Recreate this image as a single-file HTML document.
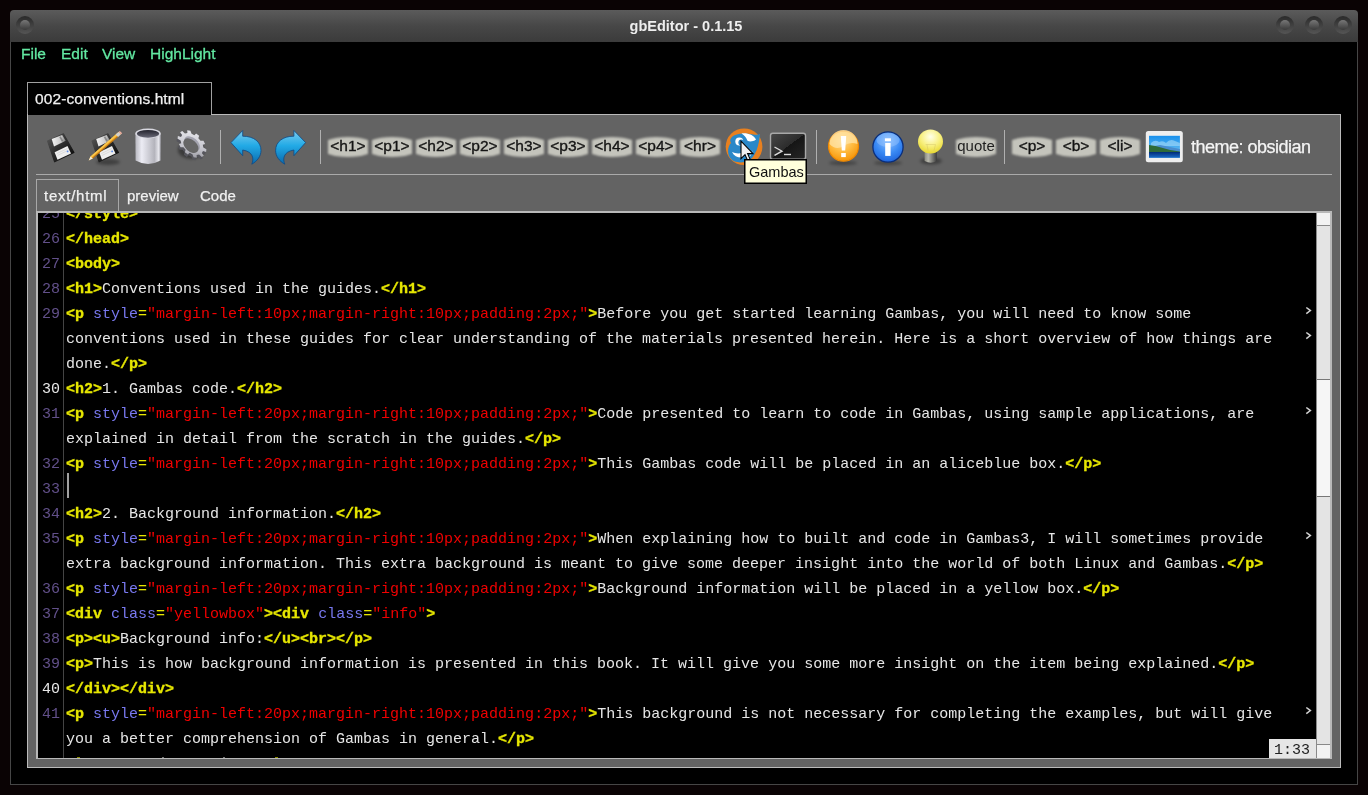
<!DOCTYPE html>
<html><head><meta charset="utf-8">
<style>
*{margin:0;padding:0;box-sizing:border-box}
html,body{width:1368px;height:795px;overflow:hidden;background:#0a0304;font-family:"Liberation Sans",sans-serif}
.abs{position:absolute}
#win{position:absolute;left:10px;top:42px;width:1348px;height:743px;background:#000;border:1px solid #464646;border-top:none}
#title{position:absolute;left:10px;top:10px;width:1348px;height:32px;border-radius:4px 4px 0 0;background:linear-gradient(#5b5b5b,#474747 50%,#3b3b3b)}
#title .t{position:absolute;left:2px;width:100%;top:8px;text-align:center;color:#eee;font-size:14.5px;font-weight:bold}
.circ{position:absolute;width:18px;height:18px;border-radius:50%;background:linear-gradient(#2a2a2a,#555);}
.circ::after{content:"";position:absolute;left:4px;top:4px;width:10px;height:10px;border-radius:50%;background:linear-gradient(#777,#3a3a3a)}
#menu span{position:absolute;top:45px;color:#62e8a2;font-size:15.5px;-webkit-text-stroke:0.3px #62e8a2}
#ftab{position:absolute;left:27px;top:82px;width:185px;height:33px;background:#000;border:1px solid #a0a0a0;border-bottom:none;color:#f0f0f0;font-size:15.5px;letter-spacing:0.1px;padding:7px 0 0 7px;-webkit-text-stroke:0.25px #f0f0f0}
#panel{position:absolute;left:27px;top:114px;width:1314px;height:654px;background:#636363;border:1px solid #bbb;border-top:none;padding-top:1px}
#ptop{position:absolute;left:211px;top:114px;width:1130px;height:1px;background:#bbb}
#ptab{position:absolute;left:28px;top:114px;width:183px;height:1px;background:#000}
#sep{position:absolute;left:36px;top:174px;width:1296px;height:1px;background:#aaa}
.stab{position:absolute;top:187px;color:#f0f0f0;font-size:15px;-webkit-text-stroke:0.25px #f0f0f0}
#editor{position:absolute;left:36px;top:211px;width:1296px;height:548px;background:#000;border:2px solid #b8b8b8;border-top-width:2px;border-bottom-width:1px;overflow:hidden}
#gutline{position:absolute;left:63px;top:213px;width:1px;height:545px;background:#444}
#code{will-change:transform;position:absolute;left:38px;top:213px;width:1278px;height:545px;overflow:hidden;font-family:"Liberation Mono",monospace;font-size:15px;line-height:25px;color:#e6e6e6;white-space:pre}
.row{position:absolute;left:0;height:25px;width:1278px}
.ln{position:absolute;left:0;width:22px;text-align:right;color:#62508a}
.ln.w{color:#e8e8e8}
.tx{position:absolute;left:28px}
i{font-style:normal}
i.k{color:#e6e600;font-weight:bold;-webkit-text-stroke:0.3px #e6e600}
i.a{color:#7878ee}
i.s{color:#f00000}
i.e{color:#e6e600}
.wm{position:absolute;left:1266px;top:0}
#scroll{position:absolute;left:1316px;top:213px;width:14px;height:545px;background:#e4e4e4;border-left:1px solid #8a8a8a}
#status{position:absolute;left:1269px;top:739px;width:47px;height:19px;background:#e6e6e6;color:#222;font-family:"Liberation Mono",monospace;font-size:15px;line-height:24px;padding-left:5px;overflow:hidden}
.tag{position:absolute;top:137px;width:40px;text-align:center;font-size:15.5px;-webkit-text-stroke:0.35px #141414;color:#141414;line-height:18px}
#theme{position:absolute;left:1191px;top:137px;font-size:18px;letter-spacing:-0.5px;color:#f4f4f4;-webkit-text-stroke:0.25px #f4f4f4}
#tip{position:absolute;left:744px;top:159px;width:63px;height:25px;background:#ffffdc;border:1px solid #000;box-shadow:inset 0 0 0 0.5px #000;font-size:14.5px;color:#111;padding:4px 0 0 4px}
#seltab{position:absolute;left:36px;top:179px;width:83px;height:34px;border:1px solid #a8a8a8;border-bottom:none}
#sbtn1{position:absolute;left:1317px;top:213px;width:13px;height:13px;background:#f2f2f2;border-bottom:1px solid #888}
#sthumb{position:absolute;left:1317px;top:379px;width:13px;height:118px;background:#f6f6f6;border-top:1px solid #777;border-bottom:1px solid #777}
#sbtn2{position:absolute;left:1317px;top:744px;width:13px;height:14px;background:#f2f2f2;border-top:1px solid #888}
#cursor{position:absolute;left:29px;top:260px;width:1.5px;height:25px;background:#a0a0a0}
</style></head><body><div id="root" style="position:absolute;left:0;top:0;width:1368px;height:795px;will-change:transform">
<div id="win"></div>
<div id="title"><div class="t">gbEditor - 0.1.15</div>
<div class="circ" style="left:6px;top:6px"></div>
<div class="circ" style="left:1266px;top:6px"></div>
<div class="circ" style="left:1295px;top:6px"></div>
<div class="circ" style="left:1324px;top:6px"></div>
</div>
<div id="menu"><span style="left:21px">File</span><span style="left:61px">Edit</span><span style="left:102px">View</span><span style="left:150px">HighLight</span></div>
<div id="ftab">002-conventions.html</div>
<div id="panel"></div><div id="ptop"></div><div id="ptab"></div>
<div id="sep"></div>
<svg id="tb" width="1368" height="200" viewBox="0 0 1368 200" style="position:absolute;left:0;top:0">
<defs>
<filter id="bl1" x="-20%" y="-20%" width="140%" height="140%"><feGaussianBlur stdDeviation="0.9"/></filter>
<filter id="bl2" x="-50%" y="-50%" width="200%" height="200%"><feGaussianBlur stdDeviation="1.6"/></filter>
<linearGradient id="flop" x1="0" y1="0" x2="1" y2="1"><stop offset="0" stop-color="#5a5a5a"/><stop offset="0.5" stop-color="#2a2a2a"/><stop offset="1" stop-color="#050505"/></linearGradient>
<linearGradient id="shut" x1="0" y1="0" x2="1" y2="0"><stop offset="0" stop-color="#f4f4f4"/><stop offset="0.7" stop-color="#c8c8c8"/><stop offset="1" stop-color="#777"/></linearGradient>
<linearGradient id="trash" x1="0" y1="0" x2="1" y2="0"><stop offset="0" stop-color="#b8b8c0"/><stop offset="0.25" stop-color="#ececf4"/><stop offset="0.75" stop-color="#b4b4bc"/><stop offset="0.92" stop-color="#e8e8ee"/><stop offset="1" stop-color="#9a9aa2"/></linearGradient>
<linearGradient id="trashin" x1="0" y1="0" x2="0" y2="1"><stop offset="0" stop-color="#22222c"/><stop offset="1" stop-color="#6a6a78"/></linearGradient>
<linearGradient id="gear" x1="0" y1="0" x2="1" y2="1"><stop offset="0" stop-color="#f0f0f4"/><stop offset="0.6" stop-color="#c4c4cc"/><stop offset="1" stop-color="#8a8a92"/></linearGradient>
<linearGradient id="arr" x1="0" y1="0" x2="0" y2="1"><stop offset="0" stop-color="#7ccbee"/><stop offset="0.45" stop-color="#22aae6"/><stop offset="1" stop-color="#0a6aae"/></linearGradient>
<radialGradient id="warn" cx="0.45" cy="0.3" r="0.75"><stop offset="0" stop-color="#ffe0a0"/><stop offset="0.5" stop-color="#ffbb40"/><stop offset="1" stop-color="#f59000"/></radialGradient>
<radialGradient id="info" cx="0.5" cy="0.3" r="0.75"><stop offset="0" stop-color="#8ec0ff"/><stop offset="0.55" stop-color="#3a8af4"/><stop offset="1" stop-color="#1a5ed8"/></radialGradient>
<radialGradient id="bulb" cx="0.5" cy="0.3" r="0.7"><stop offset="0" stop-color="#ffffe8"/><stop offset="0.55" stop-color="#f8f080"/><stop offset="1" stop-color="#e8d830"/></radialGradient>
<linearGradient id="base" x1="0" y1="0" x2="1" y2="0"><stop offset="0" stop-color="#8a8a80"/><stop offset="0.3" stop-color="#b8b8ae"/><stop offset="1" stop-color="#3a3a3a"/></linearGradient>
<linearGradient id="term" x1="0" y1="0" x2="1" y2="1"><stop offset="0" stop-color="#484848"/><stop offset="0.5" stop-color="#2c2c2c"/><stop offset="0.5" stop-color="#151515"/><stop offset="1" stop-color="#262626"/></linearGradient>
<linearGradient id="sky" x1="0" y1="0" x2="0" y2="1"><stop offset="0" stop-color="#1890ec"/><stop offset="1" stop-color="#80ccf4"/></linearGradient>
<linearGradient id="water" x1="0" y1="0" x2="0" y2="1"><stop offset="0" stop-color="#002a78"/><stop offset="1" stop-color="#1a6cc8"/></linearGradient>
<clipPath id="btnclip"><rect x="-20" y="-11" width="40" height="22"/></clipPath>

</defs>
<!-- floppy 1 -->
<g id="floppy">
<path d="M47.6,141.1 L63.4,133.8 L73.9,152.5 L54.6,161.8 Z" fill="url(#flop)" stroke="url(#flop)" stroke-width="1.2" stroke-linejoin="round"/>
<path d="M51.7,139 L62.2,134.9 L65.7,140.8 L54,146.6 Z" fill="url(#shut)"/>
<path d="M59.2,136.9 L60.8,136.3 L63.4,141 L61.8,141.7 Z" fill="#555" opacity="0.55"/>
<path d="M54.6,152.2 L67.5,146 L71,153.6 L57.5,159.8 Z" fill="#eeeeee"/>
<path d="M56.8,153.6 L67.6,148.4 M57.6,155.4 L68.4,150.2" stroke="#c8c8c8" stroke-width="0.5"/>
<circle cx="67.6" cy="151.4" r="0.9" fill="#5a8ae8"/>
</g>
<!-- floppy 2 + pencil -->
<ellipse cx="108" cy="162" rx="12" ry="3" fill="#000" opacity="0.35" filter="url(#bl2)"/>
<g transform="translate(44.5,0)">
<path d="M47.6,141.1 L63.4,133.8 L73.9,152.5 L54.6,161.8 Z" fill="url(#flop)" stroke="url(#flop)" stroke-width="1.2" stroke-linejoin="round"/>
<path d="M51.7,139 L62.2,134.9 L65.7,140.8 L54,146.6 Z" fill="url(#shut)"/>
<path d="M59.2,136.9 L60.8,136.3 L63.4,141 L61.8,141.7 Z" fill="#555" opacity="0.55"/>
<path d="M54.6,152.2 L67.5,146 L71,153.6 L57.5,159.8 Z" fill="#eeeeee"/>
<path d="M56.8,153.6 L67.6,148.4 M57.6,155.4 L68.4,150.2" stroke="#c8c8c8" stroke-width="0.5"/>
<circle cx="67.6" cy="151.4" r="0.9" fill="#5a8ae8"/>
</g>
<path d="M118.6,131.9 L121,134.3 L92.8,158.6 L88.7,160.4 L90.5,156.4 Z" fill="#f0a422"/>
<path d="M118.6,131.9 L90.5,156.4 L91.6,157.5 L119.8,133.1 Z" fill="#f8c850"/>
<path d="M121,134.3 L92.8,158.6 L92.2,158 L120.4,133.7 Z" fill="#b06a10"/>
<path d="M90.5,156.4 L92.8,158.6 L88.7,160.4 Z" fill="#f2eee0"/>
<path d="M115.6,134.4 L118.6,131.9 L121,134.3 L118,136.9 Z" fill="#cfcfcf"/>
<path d="M118.6,131.9 L119.8,130.9 L122.2,133.3 L121,134.3 Z" fill="#f0b0a0"/>
<!-- trash -->
<path d="M135.4,133.5 L135.6,160.5 Q148,167.5 160.6,160.5 L160.8,133.5 Z" fill="url(#trash)"/>
<ellipse cx="148" cy="133.5" rx="12.7" ry="5" fill="#d8d8e0"/>
<ellipse cx="148" cy="133.8" rx="11.2" ry="3.9" fill="url(#trashin)"/>
<!-- gear -->
<ellipse cx="191" cy="150" rx="13" ry="9" fill="#000" opacity="0.4" filter="url(#bl2)"/>
<g transform="translate(191,146.5) rotate(42) scale(1.08,0.7)"><path d="M12.30,0.00 L15.46,1.17 L14.80,4.60 L11.44,4.53 L9.95,7.23 L11.82,10.03 L9.27,12.42 L6.59,10.39 L3.80,11.70 L3.67,15.06 L0.19,15.50 L-0.77,12.28 L-3.80,11.70 L-5.89,14.34 L-8.95,12.65 L-7.84,9.48 L-9.95,7.23 L-13.19,8.14 L-14.68,4.97 L-11.91,3.06 L-12.30,0.00 L-15.46,-1.17 L-14.80,-4.60 L-11.44,-4.53 L-9.95,-7.23 L-11.82,-10.03 L-9.27,-12.42 L-6.59,-10.39 L-3.80,-11.70 L-3.67,-15.06 L-0.19,-15.50 L0.77,-12.28 L3.80,-11.70 L5.89,-14.34 L8.95,-12.65 L7.84,-9.48 L9.95,-7.23 L13.19,-8.14 L14.68,-4.97 L11.91,-3.06 Z" fill="#55555c"/></g>
<g transform="translate(192,144) rotate(42) scale(1.08,0.7)">
<path d="M12.30,0.00 L15.46,1.17 L14.80,4.60 L11.44,4.53 L9.95,7.23 L11.82,10.03 L9.27,12.42 L6.59,10.39 L3.80,11.70 L3.67,15.06 L0.19,15.50 L-0.77,12.28 L-3.80,11.70 L-5.89,14.34 L-8.95,12.65 L-7.84,9.48 L-9.95,7.23 L-13.19,8.14 L-14.68,4.97 L-11.91,3.06 L-12.30,0.00 L-15.46,-1.17 L-14.80,-4.60 L-11.44,-4.53 L-9.95,-7.23 L-11.82,-10.03 L-9.27,-12.42 L-6.59,-10.39 L-3.80,-11.70 L-3.67,-15.06 L-0.19,-15.50 L0.77,-12.28 L3.80,-11.70 L5.89,-14.34 L8.95,-12.65 L7.84,-9.48 L9.95,-7.23 L13.19,-8.14 L14.68,-4.97 L11.91,-3.06 Z" fill="url(#gear)"/>
<circle cx="0" cy="0" r="8.6" fill="#a4a4b0"/>
<circle cx="0.3" cy="2.8" r="8.2" fill="#666"/>
</g>
<!-- separators -->
<rect x="220" y="130" width="1" height="34" fill="#b0b0b0"/>
<rect x="320" y="130" width="1" height="34" fill="#b0b0b0"/>
<rect x="816" y="130" width="1" height="34" fill="#b0b0b0"/>
<rect x="1004" y="130" width="1" height="34" fill="#b0b0b0"/>
<!-- undo -->
<path id="undo" d="M231,142.6 L242.7,130.5 L242.7,136.2 C254,136.2 261,142 261,150.5 C261,156 257.5,161 251.8,164.2 C254,159 253.5,151.8 242.7,150 L242.7,155.7 Z" fill="url(#arr)" stroke="#0c4a86" stroke-width="0.8"/>
<path transform="translate(536.6,0) scale(-1,1)" d="M231,142.6 L242.7,130.5 L242.7,136.2 C254,136.2 261,142 261,150.5 C261,156 257.5,161 251.8,164.2 C254,159 253.5,151.8 242.7,150 L242.7,155.7 Z" fill="url(#arr)" stroke="#0c4a86" stroke-width="0.8"/>
<!-- tag buttons -->
<g transform="translate(348,147)"><g filter="url(#bl1)"><ellipse cx="0" cy="0" rx="28" ry="10" fill="#c4c4bc" clip-path="url(#btnclip)"/></g></g>
<g transform="translate(392,147)"><g filter="url(#bl1)"><ellipse cx="0" cy="0" rx="28" ry="10" fill="#c4c4bc" clip-path="url(#btnclip)"/></g></g>
<g transform="translate(436,147)"><g filter="url(#bl1)"><ellipse cx="0" cy="0" rx="28" ry="10" fill="#c4c4bc" clip-path="url(#btnclip)"/></g></g>
<g transform="translate(480,147)"><g filter="url(#bl1)"><ellipse cx="0" cy="0" rx="28" ry="10" fill="#c4c4bc" clip-path="url(#btnclip)"/></g></g>
<g transform="translate(524,147)"><g filter="url(#bl1)"><ellipse cx="0" cy="0" rx="28" ry="10" fill="#c4c4bc" clip-path="url(#btnclip)"/></g></g>
<g transform="translate(568,147)"><g filter="url(#bl1)"><ellipse cx="0" cy="0" rx="28" ry="10" fill="#c4c4bc" clip-path="url(#btnclip)"/></g></g>
<g transform="translate(612,147)"><g filter="url(#bl1)"><ellipse cx="0" cy="0" rx="28" ry="10" fill="#c4c4bc" clip-path="url(#btnclip)"/></g></g>
<g transform="translate(656,147)"><g filter="url(#bl1)"><ellipse cx="0" cy="0" rx="28" ry="10" fill="#c4c4bc" clip-path="url(#btnclip)"/></g></g>
<g transform="translate(700,147)"><g filter="url(#bl1)"><ellipse cx="0" cy="0" rx="28" ry="10" fill="#c4c4bc" clip-path="url(#btnclip)"/></g></g>
<g transform="translate(976,147)"><g filter="url(#bl1)"><ellipse cx="0" cy="0" rx="28" ry="10" fill="#c4c4bc" clip-path="url(#btnclip)"/></g></g>
<g transform="translate(1032,147)"><g filter="url(#bl1)"><ellipse cx="0" cy="0" rx="28" ry="10" fill="#c4c4bc" clip-path="url(#btnclip)"/></g></g>
<g transform="translate(1076,147)"><g filter="url(#bl1)"><ellipse cx="0" cy="0" rx="28" ry="10" fill="#c4c4bc" clip-path="url(#btnclip)"/></g></g>
<g transform="translate(1120,147)"><g filter="url(#bl1)"><ellipse cx="0" cy="0" rx="28" ry="10" fill="#c4c4bc" clip-path="url(#btnclip)"/></g></g>
<!-- gambas -->
<circle cx="744.05" cy="146.75" r="18.35" fill="#e8801f"/>
<path d="M743,133.4 C752,133.2 757,136 760,134 C759,145 756,157 748,161 C742,163.5 733,163 729.5,157 C727,152 728,146 731,143 C728,138 734,133.6 743,133.4 Z" fill="#2a88c8"/>
<path d="M741.5,133.5 C748,132.8 753.5,135 756,139.5 C753,141.8 749.5,141.8 747.5,140.8 C746.5,137.8 744.5,135.3 741.5,133.5 Z" fill="#fff"/>
<circle cx="739.3" cy="141.5" r="4" fill="#fff"/><circle cx="741.3" cy="142.4" r="2.9" fill="#2a88c8"/>
<path d="M732,152 C735,153.5 739,153.8 742,152.8 L742.5,157.5 C738,158 734,156 732,152 Z" fill="#fff"/>
<path d="M753,150 C752,154 750,157 748,158 L751,154 Z" fill="#e8eef4"/>
<!-- terminal -->
<rect x="770.5" y="133.3" width="35" height="26" rx="2.2" fill="url(#term)" stroke="#a8a8a8" stroke-width="1.4"/>
<path d="M774.5,147 L782,151.2 L774.5,155.4" fill="none" stroke="#dcdcdc" stroke-width="1.4"/>
<rect x="784" y="153.8" width="7" height="1.4" fill="#dcdcdc"/>
<!-- warning -->
<ellipse cx="843" cy="163" rx="14" ry="2.2" fill="#000" opacity="0.3" filter="url(#bl2)"/>
<circle cx="843.5" cy="146.2" r="15" fill="url(#warn)" stroke="#f08800" stroke-width="1.2"/>
<path d="M829.5,144 A14,14 0 0 1 857.5,144 Q850,141 843.5,146 Q836,151 829.5,144 Z" fill="#ffe4a8" opacity="0.75"/>
<path d="M840.8,136 L846.2,136 L845.2,150.5 L841.8,150.5 Z" fill="#fff"/>
<rect x="841.2" y="153" width="4.6" height="4.1" fill="#fff"/>
<!-- info -->
<ellipse cx="888" cy="163" rx="14" ry="2.2" fill="#000" opacity="0.3" filter="url(#bl2)"/>
<circle cx="888" cy="147" r="15.1" fill="url(#info)" stroke="#0a2e7a" stroke-width="1.3"/>
<ellipse cx="888" cy="140" rx="11.5" ry="7" fill="#9cc8ff" opacity="0.45"/>
<rect x="884.9" y="138.3" width="6" height="2.9" fill="#fff"/>
<rect x="885.2" y="143" width="5.4" height="12.9" fill="#fff"/>
<!-- bulb -->
<ellipse cx="931" cy="161" rx="11" ry="3.5" fill="#000" opacity="0.35" filter="url(#bl2)"/>
<path d="M924.6,152 L936.8,152 L936.8,161 Q930.7,164.5 924.6,161 Z" fill="url(#base)"/>
<ellipse cx="930.5" cy="141.6" rx="12.5" ry="12" fill="url(#bulb)"/>
<path d="M925.5,144.5 L935.5,144.5 L934,150.5 M927,144.5 L928,150.5" fill="none" stroke="#c8b860" stroke-width="0.5" opacity="0.7"/>
<!-- image icon -->
<rect x="1145.8" y="131" width="37" height="31.2" rx="2.5" fill="#eeeeee"/>
<rect x="1149" y="135.8" width="30.9" height="21.9" fill="url(#sky)"/>
<path d="M1151,143 Q1155,139 1159,142 Q1163,140 1166,143 Q1170,138 1175,141 L1179.9,143 L1179.9,146 L1151,146 Z" fill="#a8dcf8" opacity="0.6"/>
<path d="M1149,147 L1160,145 L1179.9,149 L1179.9,152 L1149,152 Z" fill="#4a8ed0"/>
<path d="M1149,145 Q1156,145.5 1161,147.5 Q1170,150.5 1179.9,151.5 L1179.9,153 L1149,153 Z" fill="#2e6a38"/>
<rect x="1149" y="152" width="30.9" height="5.8" fill="url(#water)"/>
<!-- cursor -->
<path d="M741,141 L741,158.6 L745,154.6 L747.8,161 L750.4,159.9 L747.6,153.6 L753,153.6 Z" fill="#f0f0f0" stroke="#000" stroke-width="1.1" stroke-linejoin="miter"/>
</svg>

<div class="tag" style="left:328px">&lt;h1&gt;</div><div class="tag" style="left:372px">&lt;p1&gt;</div><div class="tag" style="left:416px">&lt;h2&gt;</div><div class="tag" style="left:460px">&lt;p2&gt;</div><div class="tag" style="left:504px">&lt;h3&gt;</div><div class="tag" style="left:548px">&lt;p3&gt;</div><div class="tag" style="left:592px">&lt;h4&gt;</div><div class="tag" style="left:636px">&lt;p4&gt;</div><div class="tag" style="left:680px">&lt;hr&gt;</div><div class="tag" style="left:956px;-webkit-text-stroke:0;color:#1e1e1e;font-size:15px">quote</div><div class="tag" style="left:1012px">&lt;p&gt;</div><div class="tag" style="left:1056px">&lt;b&gt;</div><div class="tag" style="left:1100px">&lt;li&gt;</div>
<div id="theme">theme: obsidian</div>
<div id="tip">Gambas</div>

<div id="seltab"></div>
<div class="stab" style="left:44px;letter-spacing:0.75px">text/html</div>
<div class="stab" style="left:127px">preview</div>
<div class="stab" style="left:200px">Code</div>
<div id="editor"></div>
<div id="gutline"></div>
<div id="code">
<div class="row" style="top:-11px"><span class="ln">25</span><span class="tx"><i class="k">&lt;/style&gt;</i></span></div>
<div class="row" style="top:14px"><span class="ln">26</span><span class="tx"><i class="k">&lt;/head&gt;</i></span></div>
<div class="row" style="top:39px"><span class="ln">27</span><span class="tx"><i class="k">&lt;body&gt;</i></span></div>
<div class="row" style="top:64px"><span class="ln">28</span><span class="tx"><i class="k">&lt;h1&gt;</i>Conventions used in the guides.<i class="k">&lt;/h1&gt;</i></span></div>
<div class="row" style="top:89px"><span class="ln">29</span><span class="tx"><i class="k">&lt;p</i> <i class="a">style</i><i class="e">=</i><i class="s">"margin-left:10px;margin-right:10px;padding:2px;"</i><i class="k">&gt;</i>Before you get started learning Gambas, you will need to know some</span><svg class="wm" width="10" height="14"><polyline points="2.3,5.5 6.4,8.6 2.3,11.7" fill="none" stroke="#d0d0d0" stroke-width="1.5"/></svg></div>
<div class="row" style="top:114px"><span class="tx">conventions used in these guides for clear understanding of the materials presented herein. Here is a short overview of how things are</span><svg class="wm" width="10" height="14"><polyline points="2.3,5.5 6.4,8.6 2.3,11.7" fill="none" stroke="#d0d0d0" stroke-width="1.5"/></svg></div>
<div class="row" style="top:139px"><span class="tx">done.<i class="k">&lt;/p&gt;</i></span></div>
<div class="row" style="top:164px"><span class="ln w">30</span><span class="tx"><i class="k">&lt;h2&gt;</i>1. Gambas code.<i class="k">&lt;/h2&gt;</i></span></div>
<div class="row" style="top:189px"><span class="ln">31</span><span class="tx"><i class="k">&lt;p</i> <i class="a">style</i><i class="e">=</i><i class="s">"margin-left:20px;margin-right:10px;padding:2px;"</i><i class="k">&gt;</i>Code presented to learn to code in Gambas, using sample applications, are</span><svg class="wm" width="10" height="14"><polyline points="2.3,5.5 6.4,8.6 2.3,11.7" fill="none" stroke="#d0d0d0" stroke-width="1.5"/></svg></div>
<div class="row" style="top:214px"><span class="tx">explained in detail from the scratch in the guides.<i class="k">&lt;/p&gt;</i></span></div>
<div class="row" style="top:239px"><span class="ln">32</span><span class="tx"><i class="k">&lt;p</i> <i class="a">style</i><i class="e">=</i><i class="s">"margin-left:20px;margin-right:10px;padding:2px;"</i><i class="k">&gt;</i>This Gambas code will be placed in an aliceblue box.<i class="k">&lt;/p&gt;</i></span></div>
<div class="row" style="top:264px"><span class="ln">33</span><span class="tx"></span></div>
<div class="row" style="top:289px"><span class="ln">34</span><span class="tx"><i class="k">&lt;h2&gt;</i>2. Background information.<i class="k">&lt;/h2&gt;</i></span></div>
<div class="row" style="top:314px"><span class="ln">35</span><span class="tx"><i class="k">&lt;p</i> <i class="a">style</i><i class="e">=</i><i class="s">"margin-left:20px;margin-right:10px;padding:2px;"</i><i class="k">&gt;</i>When explaining how to built and code in Gambas3, I will sometimes provide</span><svg class="wm" width="10" height="14"><polyline points="2.3,5.5 6.4,8.6 2.3,11.7" fill="none" stroke="#d0d0d0" stroke-width="1.5"/></svg></div>
<div class="row" style="top:339px"><span class="tx">extra background information. This extra background is meant to give some deeper insight into the world of both Linux and Gambas.<i class="k">&lt;/p&gt;</i></span></div>
<div class="row" style="top:364px"><span class="ln">36</span><span class="tx"><i class="k">&lt;p</i> <i class="a">style</i><i class="e">=</i><i class="s">"margin-left:20px;margin-right:10px;padding:2px;"</i><i class="k">&gt;</i>Background information will be placed in a yellow box.<i class="k">&lt;/p&gt;</i></span></div>
<div class="row" style="top:389px"><span class="ln">37</span><span class="tx"><i class="k">&lt;div</i> <i class="a">class</i><i class="e">=</i><i class="s">"yellowbox"</i><i class="k">&gt;&lt;div</i> <i class="a">class</i><i class="e">=</i><i class="s">"info"</i><i class="k">&gt;</i></span></div>
<div class="row" style="top:414px"><span class="ln">38</span><span class="tx"><i class="k">&lt;p&gt;&lt;u&gt;</i>Background info:<i class="k">&lt;/u&gt;&lt;br&gt;&lt;/p&gt;</i></span></div>
<div class="row" style="top:439px"><span class="ln">39</span><span class="tx"><i class="k">&lt;p&gt;</i>This is how background information is presented in this book. It will give you some more insight on the item being explained.<i class="k">&lt;/p&gt;</i></span></div>
<div class="row" style="top:464px"><span class="ln w">40</span><span class="tx"><i class="k">&lt;/div&gt;&lt;/div&gt;</i></span></div>
<div class="row" style="top:489px"><span class="ln">41</span><span class="tx"><i class="k">&lt;p</i> <i class="a">style</i><i class="e">=</i><i class="s">"margin-left:20px;margin-right:10px;padding:2px;"</i><i class="k">&gt;</i>This background is not necessary for completing the examples, but will give</span><svg class="wm" width="10" height="14"><polyline points="2.3,5.5 6.4,8.6 2.3,11.7" fill="none" stroke="#d0d0d0" stroke-width="1.5"/></svg></div>
<div class="row" style="top:514px"><span class="tx">you a better comprehension of Gambas in general.<i class="k">&lt;/p&gt;</i></span></div>
<div id="cursor"></div><div style="position:absolute;left:39px;top:544px;width:3px;height:1px;background:#8a8a00"></div><div style="position:absolute;left:124px;top:544px;width:2px;height:1px;background:#777"></div><div style="position:absolute;left:185px;top:544px;width:2px;height:1px;background:#777"></div><div style="position:absolute;left:237px;top:544px;width:3px;height:1px;background:#8a8a00"></div></div>
<div id="scroll"></div><div id="sbtn1"></div><div id="sthumb"></div><div id="sbtn2"></div>
<div id="status">1:33</div>
</div></body></html>
